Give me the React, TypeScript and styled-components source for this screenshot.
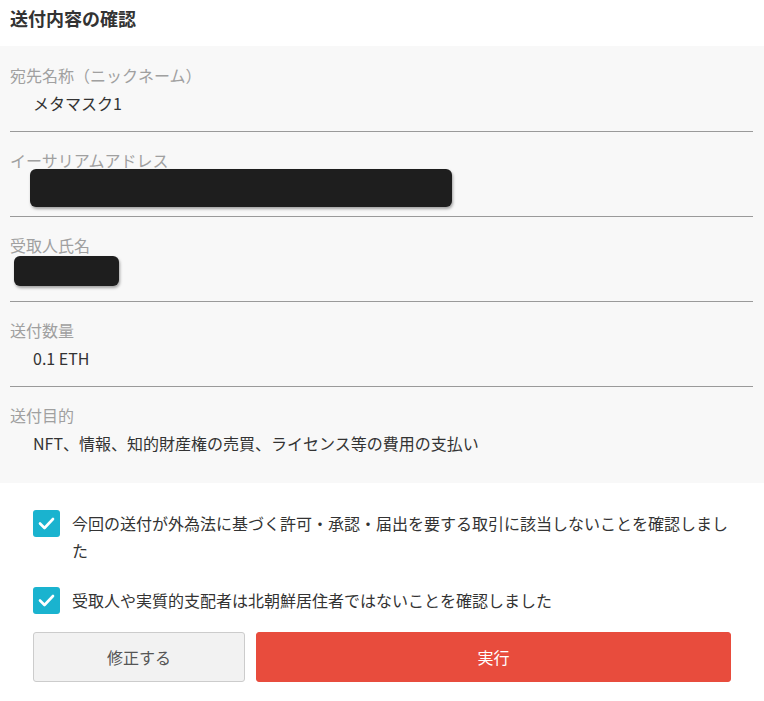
import React from 'react'
import styled, { createGlobalStyle } from 'styled-components'

const GlobalStyle = createGlobalStyle`
    body {
        margin: 0;
        background: #ffffff;
        font-family: "Noto Sans CJK JP", "Noto Sans", sans-serif;
        color: #333333;
    }
`;

type Row = {
    label: string,
    value?: string,
    redact?: { w: number, h: number, x: number, y: number }
};

const rows: Row[] = [
    { label: "宛先名称（ニックネーム）", value: "メタマスク1" },
    { label: "イーサリアムアドレス", redact: { w: 422, h: 38, x: 30, y: 2 } },
    { label: "受取人氏名", redact: { w: 105, h: 30, x: 14, y: 4 } },
    { label: "送付数量", value: "0.1 ETH" },
    { label: "送付目的", value: "NFT、情報、知的財産権の売買、ライセンス等の費用の支払い" },
];

const checks = [
    "今回の送付が外為法に基づく許可・承認・届出を要する取引に該当しないことを確認しました",
    "受取人や実質的支配者は北朝鮮居住者ではないことを確認しました",
];

function CheckIcon() {
    return (
        <svg width="17" height="13" viewBox="0 0 17 13">
            <path d="M2 6.5 L6.5 11 L15 2" fill="none" stroke="#fff" strokeWidth="2.6" strokeLinecap="round" strokeLinejoin="round" />
        </svg>
    )
}

export default function App() {
    return (
        <>
            <GlobalStyle />
            <Page>
                <Title>送付内容の確認</Title>
                <Panel>
                    {rows.map((row, index) => (
                        <Item key={index} $last={index == rows.length - 1}>
                            <Label>{row.label}</Label>
                            <Value>
                                {row.redact
                                    ? <Redacted $w={row.redact.w} $h={row.redact.h} $x={row.redact.x} $y={row.redact.y} />
                                    : row.value}
                            </Value>
                        </Item>
                    ))}
                </Panel>
                <Checks>
                    {checks.map((text, index) => (
                        <CheckRow key={index}>
                            <CheckBox><CheckIcon /></CheckBox>
                            <CheckText>{text}</CheckText>
                        </CheckRow>
                    ))}
                </Checks>
                <Buttons>
                    <Button $kind="sub">修正する</Button>
                    <Button $kind="main">実行</Button>
                </Buttons>
            </Page>
        </>
    )
}

const Page = styled.div`
    width: 764px;
    padding-bottom: 19px;
`;

const Title = styled.h1`
    margin: 0;
    height: 46px;
    padding: 5px 10px 0;
    box-sizing: border-box;
    font-size: 18px;
    line-height: 26px;
    font-weight: bold;
    color: #333333;
`;

const Panel = styled.div`
    background: #f8f8f8;
    padding: 1px 11px 0 10px;
`;

const Item = styled.div<{ $last: boolean }>`
    padding: ${p => p.$last ? "16px 0 24px" : "16px 0 12px"};
    border-bottom: ${p => p.$last ? "none" : "1px solid #9a9a9a"};
`;

const Label = styled.div`
    font-size: 16px;
    line-height: 24px;
    color: #a0a0a0;
`;

const Value = styled.div`
    display: flow-root;
    height: 32px;
    padding-left: 23px;
    font-size: 16px;
    line-height: 32px;
    color: #333333;
`;

const Redacted = styled.div<{ $w: number, $h: number, $x: number, $y: number }>`
    width: ${p => p.$w}px;
    height: ${p => p.$h}px;
    margin-left: ${p => p.$x - 33}px;
    margin-top: ${p => p.$y - 5}px;
    background: #1e1e1e;
    border-radius: 6px;
    box-shadow: 1px 2px 3px rgba(0, 0, 0, 0.35);
`;

const Checks = styled.div`
    display: flex;
    flex-direction: column;
    gap: 23px;
    padding: 27px 0 0 33px;
`;

const CheckRow = styled.div`
    display: flex;
    align-items: flex-start;
    gap: 12px;
`;

const CheckBox = styled.div`
    flex: none;
    width: 27px;
    height: 27px;
    border-radius: 3px;
    background: #1ab3cf;
    display: flex;
    align-items: center;
    justify-content: center;
`;

const CheckText = styled.div`
    width: 660px;
    font-size: 16px;
    line-height: 27px;
    color: #333333;
`;

const Buttons = styled.div`
    display: flex;
    gap: 11px;
    padding: 18px 0 0 33px;
`;

const Button = styled.button<{ $kind: "main" | "sub" }>`
    height: 50px;
    border-radius: 3px;
    font-family: inherit;
    font-size: 16px;
    width: ${p => p.$kind == "main" ? "475px" : "212px"};
    background: ${p => p.$kind == "main" ? "#e84c3d" : "#f2f2f2"};
    color: ${p => p.$kind == "main" ? "#ffffff" : "#555555"};
    border: 1px solid ${p => p.$kind == "main" ? "#e84c3d" : "#cccccc"};
`;
